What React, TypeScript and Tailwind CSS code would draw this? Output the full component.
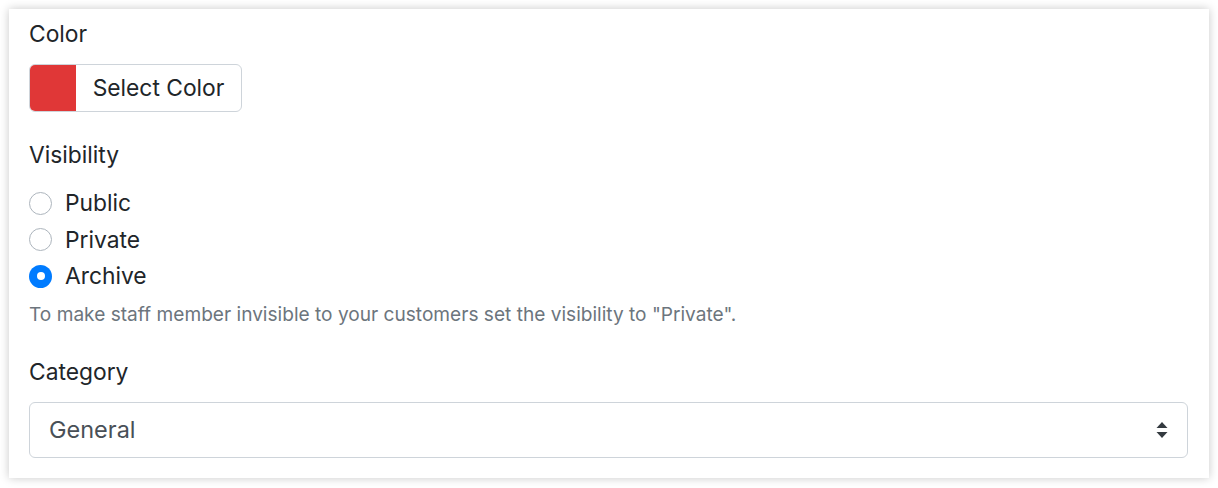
const FONT = { fontFamily: "Inter, 'Noto Sans', 'Liberation Sans', sans-serif" };

const OPCIONES = [
  { id: "public", label: "Public", checked: false },
  { id: "private", label: "Private", checked: false },
  { id: "archive", label: "Archive", checked: true },
];

function Radio({ label, checked }: { label: string; checked: boolean }) {
  return (
    <label className="flex h-[36.5px] items-center gap-[13px] text-[22.8px] text-[#212529]">
      {checked ? (
        <span className="flex h-[23px] w-[23px] items-center justify-center rounded-full bg-[#007bff]">
          <span className="h-[8px] w-[8px] rounded-full bg-white" />
        </span>
      ) : (
        <span className="h-[23px] w-[23px] rounded-full border border-[#adb5bd] bg-white" />
      )}
      {label}
    </label>
  );
}

export default function App() {
  return (
    <div className="h-[488px] bg-white p-[9px]" style={FONT}>
      <div className="flex flex-col bg-white pl-5 pr-[21px] pt-2 pb-5 shadow-[0_0_9px_rgba(0,0,0,0.22)]">
        <p className="text-[22.8px] leading-[34px] text-[#212529]">Color</p>
        <div className="mt-[13px] flex h-[48px] w-[213px] overflow-hidden rounded-[6px] border border-[#ced4da]">
          <span className="w-[46px] bg-[#e03737]" />
          <span className="flex flex-1 items-center justify-center text-[22.8px] text-[#212529]">
            Select Color
          </span>
        </div>

        <p className="mt-[26px] text-[22.8px] leading-[34px] text-[#212529]">Visibility</p>
        <div className="mt-[13px] flex flex-col">
          {OPCIONES.map((o) => (
            <Radio key={o.id} label={o.label} checked={o.checked} />
          ))}
        </div>
        <p className="mt-[6px] text-[19.1px] leading-[27px] text-[#6c757d]">
          To make staff member invisible to your customers set the visibility to "Private".
        </p>

        <p className="mt-[27px] text-[22.8px] leading-[34px] text-[#212529]">Category</p>
        <div className="mt-[13px] flex h-[56px] items-center justify-between rounded-[6px] border border-[#ced4da] pl-[19px] pr-[19px]">
          <span className="text-[23.5px] text-[#495057]">General</span>
          <svg width="12" height="16" viewBox="0 0 12 16" fill="#343a40">
            <path d="M6 0 L11.5 6 L0.5 6 Z" />
            <path d="M6 16 L11.5 10 L0.5 10 Z" />
          </svg>
        </div>
      </div>
    </div>
  );
}
